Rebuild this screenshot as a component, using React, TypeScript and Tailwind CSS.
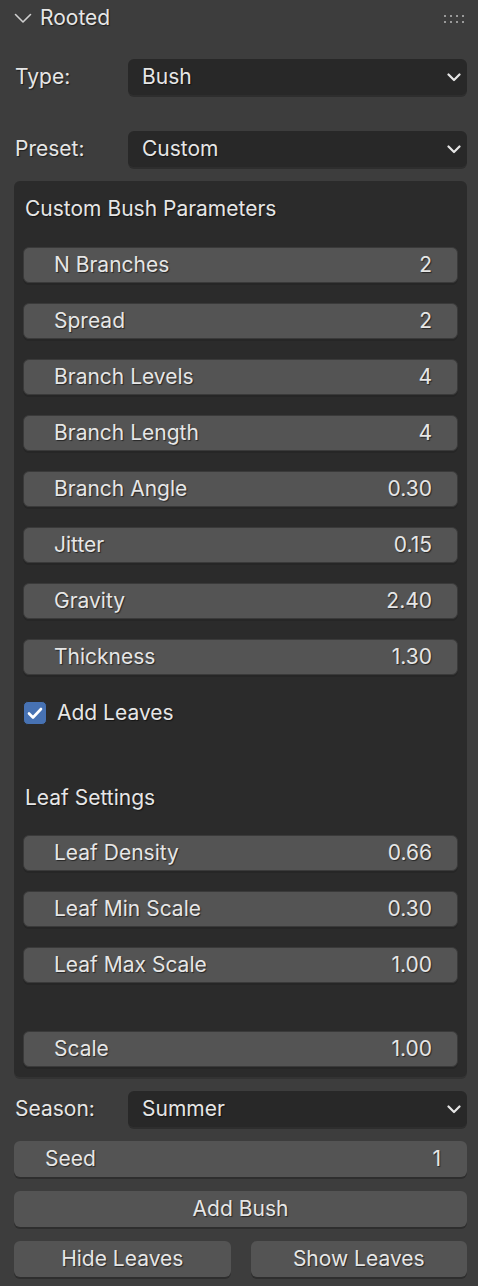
import React from 'react'

const font = { fontFamily: 'Inter, "Noto Sans", sans-serif' }
const shadow = '[text-shadow:1px_1px_1px_rgba(0,0,0,0.55)]'

function Chevron() {
  return (
    <svg width="14" height="9" viewBox="0 0 14 9" className="shrink-0">
      <path d="M1.5 1.5 L7 7 L12.5 1.5" stroke="#e6e6e6" strokeWidth="2.2" fill="none" strokeLinecap="round" strokeLinejoin="round" />
    </svg>
  )
}

function Dropdown({ label, value }: { label: string; value: string }) {
  return (
    <div className="flex items-center h-9">
      <span className={`w-[128px] pl-[15px] text-[21px] text-[#e6e6e6] ${shadow}`}>{label}</span>
      <div className="flex-1 h-9 rounded-[6px] bg-[#282828] shadow-[0_2px_0_#2e2e2e] flex items-center justify-between pl-[14px] pr-[6px]">
        <span className={`text-[21px] text-[#e6e6e6] ${shadow}`}>{value}</span>
        <Chevron />
      </div>
    </div>
  )
}

function Slider({ label, value }: { label: string; value: string }) {
  return (
    <div className="h-9 rounded-[6px] bg-[#545454] border border-[#3a3a3a] shadow-[0_2px_0_#262626] flex items-center justify-between pl-[30px] pr-[25px]">
      <span className={`text-[21px] text-[#e6e6e6] ${shadow}`}>{label}</span>
      <span className={`text-[21px] text-[#e6e6e6] ${shadow}`}>{value}</span>
    </div>
  )
}

function Button({ label }: { label: string }) {
  return (
    <div className="h-9 rounded-[6px] bg-[#545454] shadow-[0_2px_0_#2e2e2e] flex items-center justify-center">
      <span className={`text-[21px] text-[#e6e6e6] ${shadow}`}>{label}</span>
    </div>
  )
}

const params = [
  ['N Branches', '2'],
  ['Spread', '2'],
  ['Branch Levels', '4'],
  ['Branch Length', '4'],
  ['Branch Angle', '0.30'],
  ['Jitter', '0.15'],
  ['Gravity', '2.40'],
  ['Thickness', '1.30'],
]

const leaf = [
  ['Leaf Density', '0.66'],
  ['Leaf Min Scale', '0.30'],
  ['Leaf Max Scale', '1.00'],
]

export default function App() {
  return (
    <div className="w-[478px] h-[1286px] bg-[#3d3d3d] overflow-hidden" style={font}>
      {/* header */}
      <div className="h-[36px] flex items-center pl-[14px] pr-[14px]">
        <svg width="18" height="11" viewBox="0 0 18 11">
          <path d="M1.5 1.5 L9 9 L16.5 1.5" stroke="#cfcfcf" strokeWidth="1.6" fill="none" strokeLinecap="round" strokeLinejoin="round" />
        </svg>
        <span className={`ml-[8px] text-[21px] text-[#e6e6e6] ${shadow}`}>Rooted</span>
        <div className="ml-auto grid grid-cols-4 gap-x-[4px] gap-y-[4px] mt-[2px]">
          {Array.from({ length: 8 }).map((_, i) => (
            <div key={i} className="w-[2px] h-[2px] bg-[#9a9a9a]" />
          ))}
        </div>
      </div>

      <div className="pr-[11px] mt-[23px]">
        <Dropdown label="Type:" value="Bush" />
      </div>
      <div className="pr-[11px] mt-[36px]">
        <Dropdown label="Preset:" value="Custom" />
      </div>

      {/* custom box */}
      <div className="ml-[14px] mr-[11px] mt-[14px] rounded-[6px] bg-[#2b2b2b] shadow-[0_2px_0_#333] pl-[9px] pr-[9px] pt-[14px] pb-[10px]">
        <div className={`h-[28px] pl-[2px] flex items-center text-[21px] text-[#e6e6e6] ${shadow}`}>Custom Bush Parameters</div>
        <div className="mt-[24px] flex flex-col gap-[20px]">
          {params.map(([l, v]) => (
            <Slider key={l} label={l} value={v} />
          ))}
        </div>
        <div className="mt-[20px] h-9 flex items-center">
          <div className="w-[24px] h-[24px] rounded-[5px] bg-[#4772b3] border border-[#2a2a2a] flex items-center justify-center">
            <svg width="16" height="13" viewBox="0 0 16 13">
              <path d="M2 6.5 L6 10.5 L14 2" stroke="#ffffff" strokeWidth="2.6" fill="none" strokeLinecap="round" strokeLinejoin="round" />
            </svg>
          </div>
          <span className={`ml-[10px] text-[21px] text-[#e6e6e6] ${shadow}`}>Add Leaves</span>
        </div>
        <div className={`mt-[53px] h-[28px] pl-[2px] flex items-center text-[21px] text-[#e6e6e6] ${shadow}`}>Leaf Settings</div>
        <div className="mt-[23px] flex flex-col gap-[20px]">
          {leaf.map(([l, v]) => (
            <Slider key={l} label={l} value={v} />
          ))}
        </div>
        <div className="mt-[48px]">
          <Slider label="Scale" value="1.00" />
        </div>
      </div>

      <div className="pr-[11px] mt-[14px]">
        <Dropdown label="Season:" value="Summer" />
      </div>

      <div className="ml-[14px] mr-[11px] mt-[14px] flex flex-col gap-[14px]">
        <div className="h-9 rounded-[6px] bg-[#545454] shadow-[0_2px_0_#2e2e2e] flex items-center justify-between pl-[31px] pr-[26px]">
          <span className={`text-[21px] text-[#e6e6e6] ${shadow}`}>Seed</span>
          <span className={`text-[21px] text-[#e6e6e6] ${shadow}`}>1</span>
        </div>
        <Button label="Add Bush" />
        <div className="grid grid-cols-2 gap-[20px]">
          <Button label="Hide Leaves" />
          <Button label="Show Leaves" />
        </div>
      </div>
    </div>
  )
}
